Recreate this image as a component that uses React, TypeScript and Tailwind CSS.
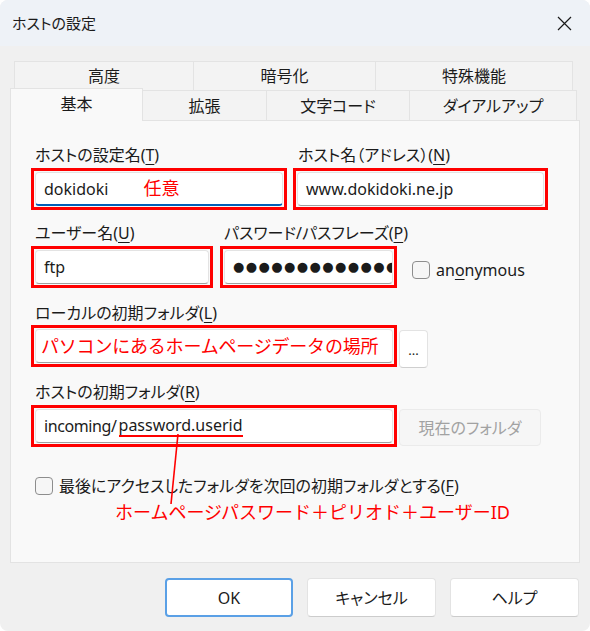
import React from 'react';

const font = "font-['Noto_Sans','Noto_Sans_CJK_JP',sans-serif] [font-feature-settings:'palt']";

function RedBox({ className, children }: { className: string; children: React.ReactNode }) {
  return <div className={`border-[3px] border-[#ff0000] p-px ${className}`}>{children}</div>;
}

function Input({ focused, children }: { focused?: boolean; children: React.ReactNode }) {
  return (
    <div
      className={`h-full bg-white rounded-[4px] border border-[#e3e3e3] flex items-center px-[8px] overflow-hidden whitespace-nowrap text-[16px] text-[#1b1b1b] ${
        focused ? 'border-b-2 border-b-[#005fb8]' : 'border-b-[#a0a0a0]'
      }`}
    >
      {children}
    </div>
  );
}

function Label({ text, k, className = '' }: { text: string; k: string; className?: string }) {
  return (
    <div className={`h-[22px] leading-[22px] text-[16px] text-[#1b1b1b] whitespace-nowrap ${className}`}>
      {text}(<span className="underline underline-offset-[3px]">{k}</span>)
    </div>
  );
}

function CheckBox() {
  return <div className="w-[18px] h-[18px] rounded-[4px] border border-[#8d8d8d] bg-[#f6f6f6] shrink-0" />;
}

export default function App() {
  return (
    <div className={`w-[590px] h-[631px] bg-[#f0f0f0] rounded-t-[8px] rounded-b-[8px] overflow-hidden flex flex-col ${font}`}>
      {/* title bar */}
      <div className="h-[46px] bg-[#eef2f7] flex items-center justify-between pl-[12px] pr-[18px]">
        <span className="text-[15px] text-[#1b1b1b]">ホストの設定</span>
        <svg width="15" height="15" viewBox="0 0 15 15">
          <path d="M1 1 L14 14 M14 1 L1 14" stroke="#1b1b1b" strokeWidth="1.2" />
        </svg>
      </div>

      {/* tabs */}
      <div className="mt-[15px] ml-[14px] flex h-[29px] text-[16px] text-[#1b1b1b]">
        <div className="w-[180px] border-t border-l border-r border-[#e3e3e3] bg-[#f3f3f3] flex justify-center items-center">高度</div>
        <div className="w-[182px] border-t border-r border-[#e3e3e3] bg-[#f3f3f3] flex justify-center items-center">暗号化</div>
        <div className="w-[197px] border-t border-r border-[#e3e3e3] bg-[#f3f3f3] flex justify-center items-center">特殊機能</div>
      </div>
      <div className="-mt-[2px] ml-[10px] flex items-end h-[32px] relative z-10 text-[16px] text-[#1b1b1b]">
        <div className="w-[133px] h-[33px] -mb-px bg-[#f9f9f9] border-t border-l border-r border-[#e3e3e3] flex justify-center items-center pb-[3px]">基本</div>
        <div className="w-[124px] h-[30px] bg-[#f3f3f3] border-t border-r border-[#e3e3e3] flex justify-center items-center">拡張</div>
        <div className="w-[143px] h-[30px] bg-[#f3f3f3] border-t border-r border-[#e3e3e3] flex justify-center items-center">文字コード</div>
        <div className="w-[167px] h-[30px] bg-[#f3f3f3] border-t border-r border-[#e3e3e3] flex justify-center items-center">ダイアルアップ</div>
      </div>

      {/* panel */}
      <div className="mx-[10px] h-[443px] border border-[#e3e3e3] bg-[#f9f9f9] relative">
        <div className="pl-[20px] pt-[23px]">
          <div className="flex gap-[6px]">
            <div className="w-[256px]">
              <Label text="ホストの設定名" k="T" className="pl-[4px]" />
              <RedBox className="mt-[2px] h-[42px]">
                <Input focused>
                  <span>dokidoki</span>
                  <span className="ml-[35px] text-[#ff0000] text-[18px]">任意</span>
                </Input>
              </RedBox>
            </div>
            <div className="w-[255px]">
              <Label text="ホスト名（アドレス）" k="N" className="pl-[5px]" />
              <RedBox className="mt-[2px] h-[42px]">
                <Input>www.dokidoki.ne.jp</Input>
              </RedBox>
            </div>
          </div>

          <div className="mt-[12px] flex items-start">
            <div className="w-[182px]">
              <Label text="ユーザー名" k="U" className="pl-[4px]" />
              <RedBox className="mt-[2px] h-[42px]">
                <Input>ftp</Input>
              </RedBox>
            </div>
            <div className="ml-[7px] w-[177px]">
              <Label text="パスワード/パスフレーズ" k="P" className="pl-[4px]" />
              <RedBox className="mt-[2px] h-[42px]">
                <Input>
                  <span className="font-['DejaVu_Sans',sans-serif] text-[13px] tracking-[1.4px]">●●●●●●●●●●●●●●●</span>
                </Input>
              </RedBox>
            </div>
            <div className="ml-[15px] mt-[39px] flex items-center">
              <CheckBox />
              <span className="ml-[6px] text-[16px] text-[#1b1b1b] leading-[18px]">
                an<span className="underline underline-offset-[3px]">o</span>nymous
              </span>
            </div>
          </div>

          <div className="mt-[14px]">
            <Label text="ローカルの初期フォルダ" k="L" className="pl-[4px]" />
            <div className="mt-[1px] flex items-start">
              <RedBox className="w-[366px] h-[42px]">
                <Input>
                  <span className="text-[#ff0000] text-[18px] -ml-[3px] [font-feature-settings:normal] tracking-[-0.2px]">パソコンにあるホームページデータの場所</span>
                </Input>
              </RedBox>
              <div className="ml-[2px] mt-[5px] w-[29px] h-[38px] bg-white border border-[#e3e3e3] border-b-[#cfcfcf] rounded-[4px] flex items-center justify-center text-[13px] text-[#1b1b1b] pt-[4px]">
                ...
              </div>
            </div>
          </div>

          <div className="mt-[13px]">
            <Label text="ホストの初期フォルダ" k="R" className="pl-[4px]" />
            <div className="mt-[2px] flex items-start">
              <RedBox className="w-[366px] h-[42px]">
                <Input>
                  <span className="tracking-[-0.4px]">incoming/</span>
                  <span className="ml-[2px] border-b-2 border-[#ff0000] leading-[20px]">password.userid</span>
                </Input>
              </RedBox>
              <div className="ml-[2px] mt-[4px] w-[142px] h-[37px] bg-[#f6f6f6] border border-[#ebebeb] rounded-[4px] flex items-center justify-center text-[16px] text-[#a2a2a2]">
                現在のフォルダ
              </div>
            </div>
          </div>

          <div className="mt-[28px] pl-[4px] flex items-center">
            <CheckBox />
            <span className="ml-[6px] text-[16px] text-[#1b1b1b] leading-[22px]">
              最後にアクセスしたフォルダを次回の初期フォルダとする(<span className="underline underline-offset-[3px]">F</span>)
            </span>
          </div>
          <div className="mt-[3px] ml-[84px] text-[18px] leading-[24px] text-[#ff0000] whitespace-nowrap [font-feature-settings:normal]">
            ホームページパスワード＋ピリオド＋ユーザーID
          </div>
        </div>

        <svg className="absolute left-[155px] top-[310px] pointer-events-none" width="20" height="76" viewBox="0 0 20 76">
          <line x1="12" y1="3" x2="5" y2="73" stroke="#ff0000" strokeWidth="1.6" />
        </svg>
      </div>

      {/* buttons */}
      <div className="flex justify-end gap-[14px] pr-[11px] pt-[15px] text-[16px] text-[#1b1b1b]">
        <div className="w-[128px] h-[39px] bg-white rounded-[4px] border-2 border-[#5aa0e6] flex items-center justify-center">OK</div>
        <div className="w-[129px] h-[39px] bg-white rounded-[4px] border border-[#e3e3e3] border-b-[#cccccc] flex items-center justify-center">キャンセル</div>
        <div className="w-[129px] h-[39px] bg-white rounded-[4px] border border-[#e3e3e3] border-b-[#cccccc] flex items-center justify-center">ヘルプ</div>
      </div>
    </div>
  );
}
